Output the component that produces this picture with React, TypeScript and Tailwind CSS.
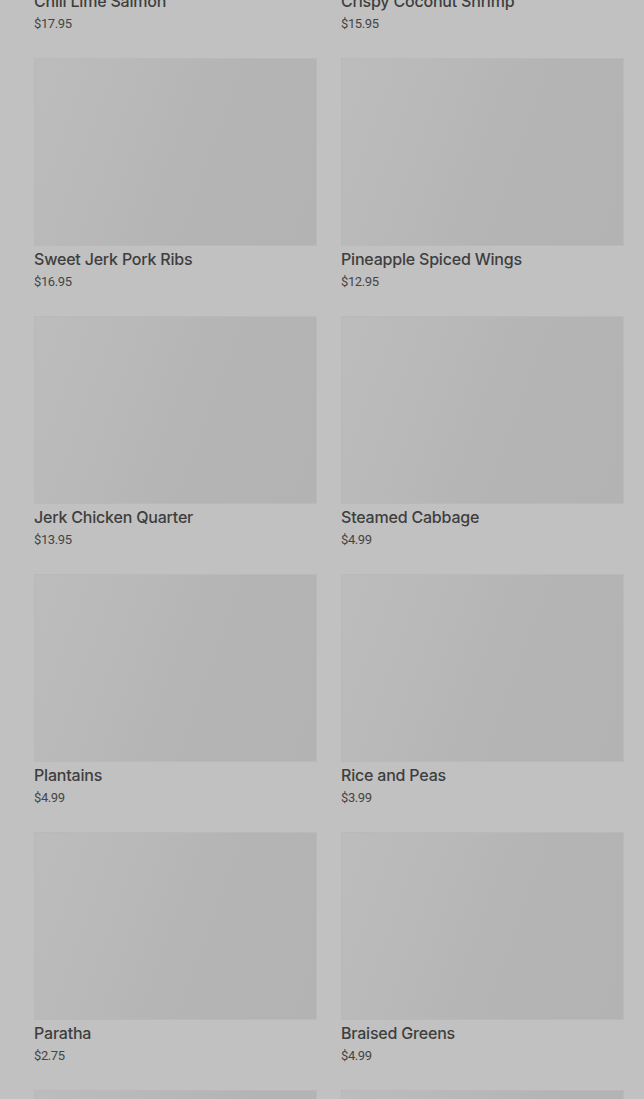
import React from "react";

const items = [
  { name: "Chili Lime Salmon", price: "$17.95" },
  { name: "Crispy Coconut Shrimp", price: "$15.95" },
  { name: "Sweet Jerk Pork Ribs", price: "$16.95" },
  { name: "Pineapple Spiced Wings", price: "$12.95" },
  { name: "Jerk Chicken Quarter", price: "$13.95" },
  { name: "Steamed Cabbage", price: "$4.99" },
  { name: "Plantains", price: "$4.99" },
  { name: "Rice and Peas", price: "$3.99" },
  { name: "Paratha", price: "$2.75" },
  { name: "Braised Greens", price: "$4.99" },
  { name: "Oxtail", price: "$19.95" },
  { name: "Curry Goat", price: "$18.95" },
];

export default function App() {
  return (
    <div className="h-[1099px] overflow-hidden bg-[#c1c1c1] font-['Roboto',sans-serif]">
      <div className="-mt-[200px] grid grid-cols-2 gap-x-6 gap-y-6 pl-[34px] pr-[20px]">
        {items.map((it) => (
          <div key={it.name} className="flex flex-col">
            <div className="h-[188px] border border-[#b9b9b9] bg-[linear-gradient(110deg,#bcbcbc_0%,#b8b8b8_35%,#b4b4b4_60%,#b3b3b3_100%)]" />
            <div className="mt-[1px] font-['Inter',sans-serif] text-[16px] leading-[24px] tracking-[-0.2px] font-medium text-[#3e3e3e]">{it.name}</div>
            <div className="text-[13px] leading-[21px] tracking-[-0.4px] text-[#454545]">{it.price}</div>
          </div>
        ))}
      </div>
    </div>
  );
}
